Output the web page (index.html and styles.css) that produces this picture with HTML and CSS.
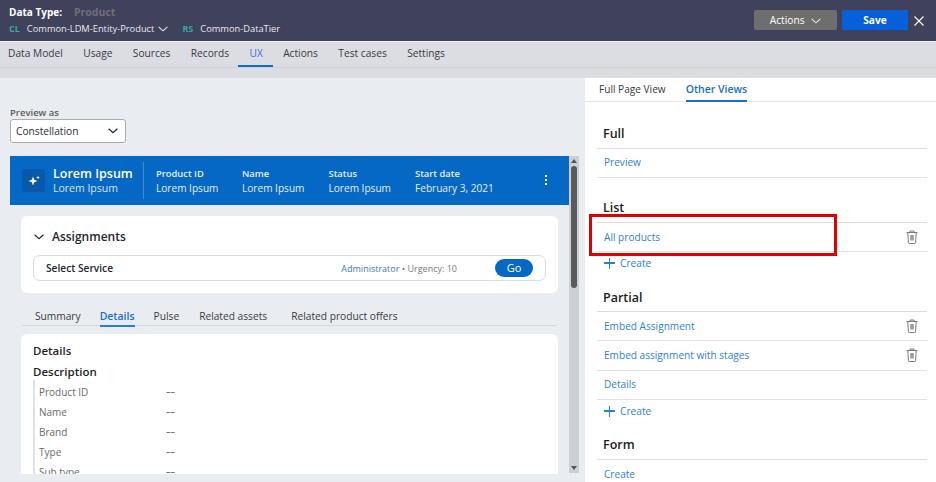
FILE: index.html
```html
<!DOCTYPE html>
<html lang="en">

<head>
    <meta charset="utf-8">
    <title>Data Type: Product</title>
    <link rel="stylesheet" href="styles.css">
</head>

<body>
    <header class="topbar">
        <div class="topbar-info">
            <div class="title-line">
                <span class="title-label">Data Type:</span>
                <span class="title-name">Product</span>
            </div>
            <div class="class-line">
                <span class="tag">CL</span>
                <span>Common-LDM-Entity-Product</span>
                <svg class="chev" viewBox="0 0 10 6" width="10" height="6"><path d="M.6.8 5 4.8 9.4.8" /></svg>
                <span class="tag tag-rs">RS</span>
                <span>Common-DataTier</span>
            </div>
        </div>
        <div class="topbar-actions">
            <button class="btn-actions">Actions
                <svg class="chev" viewBox="0 0 10 6" width="10" height="6"><path d="M.6.8 5 4.8 9.4.8" /></svg>
            </button>
            <button class="btn-save">Save</button>
            <svg class="close" viewBox="0 0 10 10" width="10" height="10"><path d="M.5.5l9 9M9.5.5l-9 9" /></svg>
        </div>
    </header>

    <nav class="tabs">
        <a>Data Model</a>
        <a>Usage</a>
        <a>Sources</a>
        <a>Records</a>
        <a class="active">UX</a>
        <a>Actions</a>
        <a>Test cases</a>
        <a>Settings</a>
    </nav>
    <div class="strip"></div>

    <main class="panels">
        <section class="preview">
            <div class="preview-head">
                <label class="preview-label">Preview as</label>
                <div class="select">
                    <span>Constellation</span>
                    <svg class="chev-dark" viewBox="0 0 10 6" width="10" height="6"><path d="M.6.8 5 4.8 9.4.8" /></svg>
                </div>
            </div>

            <div class="preview-scroll">
                <div class="preview-body">
                    <div class="banner">
                        <div class="banner-icon">
                            <svg viewBox="0 0 12 12" width="12" height="12">
                                <path d="M5 1.5 6.2 4.8 9.5 6 6.2 7.2 5 10.5 3.8 7.2.5 6 3.8 4.8z" />
                                <path d="M10 .5l.5 1.5 1.5.5-1.5.5-.5 1.500-.5-1.500L8 2.500 9.500 2z" />
                            </svg>
                        </div>
                        <div class="banner-title">
                            <div class="banner-name">Lorem Ipsum</div>
                            <div class="banner-sub">Lorem Ipsum</div>
                        </div>
                        <div class="banner-field field-id">
                            <strong>Product ID</strong>
                            <span>Lorem Ipsum</span>
                        </div>
                        <div class="banner-field">
                            <strong>Name</strong>
                            <span>Lorem Ipsum</span>
                        </div>
                        <div class="banner-field">
                            <strong>Status</strong>
                            <span>Lorem Ipsum</span>
                        </div>
                        <div class="banner-field">
                            <strong>Start date</strong>
                            <span>February 3, 2021</span>
                        </div>
                        <div class="dots"><i></i><i></i><i></i></div>
                    </div>

                    <div class="card assignments">
                        <div class="assign-head">
                            <svg class="chev-dark" viewBox="0 0 10 6" width="10" height="6"><path d="M.6.8 5 4.8 9.4.8" /></svg>
                            <span>Assignments</span>
                        </div>
                        <div class="assign-row">
                            <span class="assign-name">Select Service</span>
                            <span class="assign-meta"><a>Administrator</a> • Urgency: 10</span>
                            <button class="btn-go">Go</button>
                        </div>
                    </div>

                    <div class="subtabs">
                        <a>Summary</a>
                        <a class="active">Details</a>
                        <a>Pulse</a>
                        <a>Related assets</a>
                        <a>Related product offers</a>
                    </div>

                    <div class="card details">
                        <h3>Details</h3>
                        <h4>Description</h4>
                        <div class="fields">
                            <div class="field"><span>Product ID</span><b>––</b></div>
                            <div class="field"><span>Name</span><b>––</b></div>
                            <div class="field"><span>Brand</span><b>––</b></div>
                            <div class="field"><span>Type</span><b>––</b></div>
                            <div class="field"><span>Sub type</span><b>––</b></div>
                        </div>
                    </div>
                </div>

                <div class="scrollbar">
                    <div class="arrow-up"></div>
                    <div class="thumb"></div>
                    <div class="arrow-down"></div>
                </div>
            </div>
        </section>

        <aside class="views">
            <div class="view-tabs">
                <a>Full Page View</a>
                <a class="active">Other Views</a>
            </div>

            <div class="view-groups">
                <h2 class="first">Full</h2>
                <div class="row up"><a>Preview</a></div>

                <h2 class="list-head">List</h2>
                <div class="row"><a>All products</a>
                    <svg class="trash" viewBox="0 0 12 14" width="12" height="14"><use href="#trash" /></svg>
                </div>
                <div class="create"><span class="plus"></span><a>Create</a></div>

                <h2 class="partial-head">Partial</h2>
                <div class="row"><a>Embed Assignment</a>
                    <svg class="trash" viewBox="0 0 12 14" width="12" height="14"><use href="#trash" /></svg>
                </div>
                <div class="row tall up"><a>Embed assignment with stages</a>
                    <svg class="trash" viewBox="0 0 12 14" width="12" height="14"><use href="#trash" /></svg>
                </div>
                <div class="row up"><a>Details</a></div>
                <div class="create"><span class="plus"></span><a>Create</a></div>

                <h2>Form</h2>
                <div class="row"><a>Create</a></div>
            </div>
        </aside>
    </main>

    <div class="highlight"></div>

    <svg class="defs" width="0" height="0">
        <symbol id="trash" viewBox="0 0 12 14">
            <path d="M.5 2.500h11M4 2.500V1h4v1.500M1.800 2.500l.6 10.200q0 .8.8.8h5.600q.8 0 .8-.8l.6-10.200" fill="none" stroke="#7a7a7a" />
            <rect x="4.200" y="5" width="3.600" height="5.500" fill="#9a9a9a" />
        </symbol>
    </svg>
</body>

</html>
```

FILE: styles.css
```css
* {
    box-sizing: border-box;
}

html,
body {
    margin: 0;
    padding: 0;
    height: 482px;
    overflow: hidden;
}

body {
    font-family: "Open Sans", "Noto Sans", sans-serif;
    font-size: 11px;
    color: #2b2b33;
    background-color: white;
    position: relative;
}

svg path {
    fill: none;
}

/* top bar */

.topbar {
    display: flex;
    justify-content: space-between;
    height: 41px;
    padding: 5px 12px 0 9px;
    background-color: #40415a;
    color: #e8e8ee;
}

.title-line {
    display: flex;
    gap: 12px;
    line-height: 15px;
}

.title-label {
    font-size: 10px;
    font-weight: 700;
    color: white;
}

.title-name {
    font-size: 10.5px;
    font-weight: 700;
    color: #6f6f74;
}

.class-line {
    display: flex;
    align-items: center;
    line-height: 16px;
    margin-top: 1px;
    font-size: 9.3px;
}

.tag {
    font-size: 9px;
    font-weight: 700;
    color: #3aa8a4;
    margin-right: 7px;
}

.tag-rs {
    margin-left: 14px;
}

.chev {
    margin-left: 4px;
    stroke: #e8e8ee;
    stroke-width: 1.1;
}

.chev-dark {
    stroke: #26262e;
    stroke-width: 1.2;
}

.topbar-actions {
    display: flex;
    align-items: flex-start;
    padding-top: 5px;
}

.topbar-actions button {
    height: 20px;
    border: 0;
    border-radius: 2px;
    font-family: inherit;
    font-size: 10.2px;
    color: white;
    padding: 0;
}

.btn-actions {
    width: 83px;
    background-color: #6e6e6e;
    margin-right: 5px;
}

.btn-save {
    width: 66px;
    background-color: #0560d9;
    font-weight: 700;
}

.close {
    margin: 6px 0 0 6px;
    stroke: white;
    stroke-width: 1.1;
}

/* page tabs */

.tabs {
    display: flex;
    gap: 20.4px;
    height: 27px;
    padding-left: 8px;
    background-color: #dcdde2;
    border-top: 1px solid #eef0f2;
    border-bottom: 1px solid #cfd0d6;
    line-height: 23px;
    font-size: 10.2px;
    color: #3a3a44;
}

.tabs a {
    position: relative;
}

.tabs .active {
    color: #3f6fd8;
}

.tabs .active::after {
    content: "";
    position: absolute;
    left: -11px;
    right: -10px;
    top: 23px;
    height: 2px;
    background-color: #0c6bd0;
}

.strip {
    height: 10px;
    background-color: #dcdde2;
}

/* two panels */

.panels {
    display: flex;
    height: 404px;
}

.preview {
    width: 585px;
    background-color: #e9edf1;
}

.preview-head {
    padding: 28px 0 0 10px;
    height: 78px;
}

.preview-label {
    display: block;
    font-size: 9.5px;
    font-weight: 600;
    color: #5c5c5c;
    line-height: 13px;
}

.select {
    display: flex;
    align-items: center;
    justify-content: space-between;
    width: 116px;
    height: 24px;
    padding: 0 7px 0 5px;
    background-color: white;
    border: 1px solid #a9acb1;
    border-radius: 3px;
    font-size: 10.2px;
    color: #2b2b33;
}

.preview-scroll {
    display: flex;
    height: 318px;
    padding-left: 10px;
}

.preview-body {
    width: 559px;
    overflow: hidden;
}

/* blue case banner */

.banner {
    display: flex;
    align-items: center;
    height: 49px;
    padding-left: 12px;
    background-color: #0568c4;
    color: white;
    position: relative;
}

.banner-icon {
    display: flex;
    align-items: center;
    justify-content: center;
    width: 23px;
    height: 23px;
    background-color: #0a58a8;
    border-radius: 3px;
    margin-right: 8px;
}

.banner-icon path {
    fill: white;
}

.banner-title {
    width: 90px;
    line-height: 15px;
}

.banner-name {
    font-size: 12.5px;
    font-weight: 600;
}

.banner-sub {
    font-size: 10.5px;
    color: #d5e6f7;
}

.banner-field {
    display: flex;
    flex-direction: column;
    width: 86.5px;
    line-height: 15px;
    font-size: 10.1px;
    color: #e4eff9;
}

.banner-field strong {
    font-size: 9.4px;
    font-weight: 600;
}

.field-id {
    width: 99px;
    height: 37px;
    justify-content: center;
    padding-left: 12px;
    border-left: 1px solid #3f8ad2;
}

.dots {
    position: absolute;
    left: 535px;
    top: 19px;
    display: flex;
    flex-direction: column;
    gap: 2px;
}

.dots i {
    width: 2px;
    height: 2px;
    background-color: white;
}

/* cards */

.card {
    background-color: white;
    border-radius: 6px;
    margin: 0 11px;
}

.assignments {
    height: 77px;
    margin-top: 11px;
    padding: 12px 12px 0;
}

.assign-head {
    display: flex;
    align-items: center;
    gap: 8px;
    height: 17px;
    padding-left: 1px;
    font-size: 12px;
    font-weight: 600;
    color: #26262e;
}

.assign-row {
    display: flex;
    align-items: center;
    height: 26px;
    margin-top: 10px;
    padding: 0 12px 0 12px;
    border: 1px solid #dcdde0;
    border-radius: 7px;
    font-size: 10.2px;
}

.assign-name {
    flex: 1;
    font-weight: 600;
    color: #26262e;
}

.assign-meta {
    font-size: 9px;
    color: #7a7a7a;
}

.assign-meta a {
    color: #3c78c4;
}

.btn-go {
    width: 38px;
    height: 18px;
    margin-left: 38px;
    padding: 0;
    border: 0;
    border-radius: 9px;
    background-color: #0568c4;
    color: white;
    font-family: inherit;
    font-size: 11px;
    line-height: 16px;
}

.subtabs {
    display: flex;
    height: 33px;
    margin: 0 12px 8px;
    padding: 14px 0 0 13px;
    border-bottom: 1px solid #d5d8dc;
    line-height: 18px;
    font-size: 10.2px;
    color: #3a3a44;
}

.subtabs a {
    position: relative;
    margin-right: 19px;
}

.subtabs a:nth-child(3) {
    margin-right: 20px;
}

.subtabs a:nth-child(4) {
    margin-right: 24px;
}

.subtabs .active {
    color: #1a6ec7;
    font-size: 10.5px;
    font-weight: 600;
}

.subtabs .active::after {
    content: "";
    position: absolute;
    left: 0;
    right: 0;
    top: 18px;
    height: 2px;
    background-color: #2b7fd1;
}

.details {
    height: 140px;
    overflow: hidden;
    padding: 8px 12px 0;
    border-radius: 6px 6px 0 0;
}

.details h3 {
    margin: 0;
    font-size: 11.5px;
    font-weight: 600;
    line-height: 17px;
    color: #1f1f26;
}

.details h4 {
    margin: 4px 0 0;
    font-size: 11.5px;
    font-weight: 600;
    line-height: 17px;
    color: #1f1f26;
}

.fields {
    border-left: 2px solid #dde0e4;
    padding: 2px 0 0 4px;
}

.field {
    display: flex;
    height: 20px;
    line-height: 20px;
    font-size: 10px;
    color: #6a6a6a;
}

.field span {
    width: 127px;
}

.field b {
    font-weight: 400;
    font-size: 9px;
    color: #444;
}

/* scrollbar of the preview */

.scrollbar {
    display: flex;
    flex-direction: column;
    align-items: center;
    width: 10px;
    background-color: #ccd0d4;
    height: 317px;
}

.arrow-up,
.arrow-down {
    width: 0;
    height: 0;
    border-left: 3px solid transparent;
    border-right: 3px solid transparent;
}

.arrow-up {
    margin-top: 3px;
    border-bottom: 4px solid #555;
}

.arrow-down {
    margin-top: auto;
    margin-bottom: 3px;
    border-top: 4px solid #555;
}

.thumb {
    width: 6px;
    height: 122px;
    margin-top: 3px;
    border-radius: 3px;
    background-color: #5a5a5a;
}

/* other views */

.views {
    flex: 1;
    background-color: white;
}

.view-tabs {
    display: flex;
    gap: 20px;
    height: 24px;
    padding-left: 14px;
    border-bottom: 1px solid #e4e5e8;
    line-height: 22px;
    font-size: 10.1px;
    color: #3a3a44;
}

.view-tabs .active {
    height: 24px;
    border-bottom: 2px solid #1a6ec7;
    color: #1a6ec7;
    font-size: 10.5px;
    font-weight: 600;
}

.view-groups {
    padding-left: 12px;
    width: 342px;
}

.view-groups h2 {
    margin: 0;
    padding: 11px 0 0 6px;
    height: 35px;
    font-size: 12.5px;
    line-height: 17px;
    font-weight: 600;
    color: #1c1c22;
    border-bottom: 1px solid #dcdde0;
}

.view-groups h2.first {
    height: 47px;
    padding-top: 23px;
}

.view-groups h2.list-head {
    height: 45px;
    padding-top: 21px;
}

.view-groups h2.partial-head {
    padding-top: 12px;
}

.row {
    display: flex;
    align-items: center;
    justify-content: space-between;
    height: 29px;
    padding: 0 9px 0 7px;
    border-bottom: 1px solid #e1e2e5;
    font-size: 10.1px;
}

.row.tall {
    height: 30px;
}

.row.up {
    padding-bottom: 2px;
}

.row a,
.create a {
    color: #2f7fd6;
}

.create {
    display: flex;
    align-items: center;
    gap: 5px;
    height: 25px;
    padding: 0 0 3px 7px;
    font-size: 10.2px;
}

.plus {
    position: relative;
    width: 11px;
    height: 11px;
}

.plus::before,
.plus::after {
    content: "";
    position: absolute;
    background-color: #2f7fd6;
}

.plus::before {
    left: 0;
    top: 4.5px;
    width: 11px;
    height: 1.5px;
}

.plus::after {
    left: 4.5px;
    top: 0;
    width: 1.5px;
    height: 11px;
}

.trash {
    display: block;
}

.defs {
    position: absolute;
}

/* red annotation box */

.highlight {
    position: absolute;
    left: 589px;
    top: 214px;
    width: 248px;
    height: 42px;
    border: 3px solid #e00000;
}
```
